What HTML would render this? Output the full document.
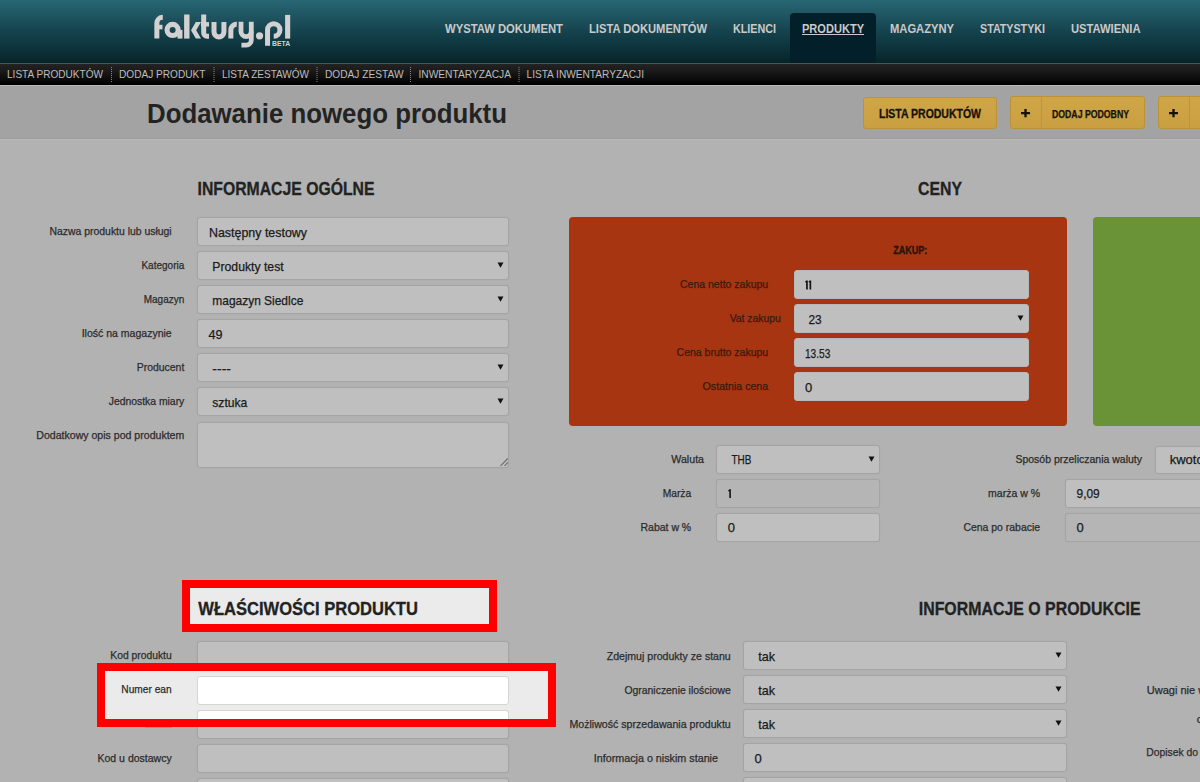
<!DOCTYPE html>
<html><head><meta charset="utf-8"><style>
html,body{margin:0;padding:0;}
body{width:1200px;height:782px;overflow:hidden;position:relative;background:#b2b2b2;font-family:"Liberation Sans",sans-serif;}
#b>div{position:absolute;}
svg{position:absolute;left:0;top:0;}
svg text{font-family:"Liberation Sans",sans-serif;}
</style></head><body>
<div id="b">
<div style="left:0px;top:0px;width:1200px;height:63px;background:linear-gradient(#286674,#15434d 50%,#06242a)"></div>
<div style="left:790px;top:13px;width:86px;height:50px;background:#03202a;border-radius:4px 4px 0 0"></div>
<div style="left:0px;top:63px;width:1200px;height:1px;background:#4a5557"></div>
<div style="left:0px;top:64px;width:1200px;height:21px;background:linear-gradient(#232323,#1b1b1b 30%,#000)"></div>
<div style="left:0px;top:85px;width:1200px;height:1px;background:#bababa"></div>
<div style="left:0px;top:86px;width:1200px;height:52px;background:#a3a3a3"></div>
<div style="left:0px;top:138px;width:1200px;height:1px;background:#9c9c9c"></div>
<div style="left:0px;top:139px;width:1200px;height:1px;background:#b8b8b8"></div>
<div style="left:863px;top:97px;width:134px;height:32px;background:linear-gradient(#cfa647,#c99f42);border:1px solid #bb9236;border-radius:3px;box-sizing:border-box"></div>
<div style="left:1010px;top:96px;width:135px;height:33px;background:linear-gradient(#cfa647,#c99f42);border:1px solid #bb9236;border-radius:3px;box-sizing:border-box"></div>
<div style="left:1041px;top:97px;width:1px;height:31px;background:#bf9538"></div>
<div style="left:1158px;top:96px;width:60px;height:33px;background:linear-gradient(#cfa647,#c99f42);border:1px solid #bb9236;border-radius:3px;box-sizing:border-box"></div>
<div style="left:1189px;top:97px;width:1px;height:31px;background:#bf9538"></div>
<div style="left:197px;top:217px;width:312px;height:29px;background:#bfbfbf;border:1px solid #a4a4a4;border-radius:3px;box-sizing:border-box;box-shadow:0 0 1px rgba(0,0,0,0.08)"></div>
<div style="left:197px;top:251px;width:312px;height:29px;background:#bfbfbf;border:1px solid #a4a4a4;border-radius:3px;box-sizing:border-box;box-shadow:0 0 1px rgba(0,0,0,0.08)"></div>
<div style="left:197px;top:285px;width:312px;height:29px;background:#bfbfbf;border:1px solid #a4a4a4;border-radius:3px;box-sizing:border-box;box-shadow:0 0 1px rgba(0,0,0,0.08)"></div>
<div style="left:197px;top:319px;width:312px;height:29px;background:#bfbfbf;border:1px solid #a4a4a4;border-radius:3px;box-sizing:border-box;box-shadow:0 0 1px rgba(0,0,0,0.08)"></div>
<div style="left:197px;top:353px;width:312px;height:29px;background:#bfbfbf;border:1px solid #a4a4a4;border-radius:3px;box-sizing:border-box;box-shadow:0 0 1px rgba(0,0,0,0.08)"></div>
<div style="left:197px;top:387px;width:312px;height:29px;background:#bfbfbf;border:1px solid #a4a4a4;border-radius:3px;box-sizing:border-box;box-shadow:0 0 1px rgba(0,0,0,0.08)"></div>
<div style="left:197px;top:422px;width:312px;height:46px;background:#bfbfbf;border:1px solid #a4a4a4;border-radius:3px;box-sizing:border-box;box-shadow:0 0 1px rgba(0,0,0,0.08)"></div>
<div style="left:569px;top:217px;width:498px;height:209px;background:#a83512;border-radius:4px"></div>
<div style="left:1093px;top:217px;width:120px;height:209px;background:#6a9338;border-radius:4px"></div>
<div style="left:794px;top:270px;width:235px;height:29px;background:#bfbfbf;border:1px solid #b8b8b8;border-radius:3px;box-sizing:border-box;box-shadow:0 0 1px rgba(0,0,0,0.08)"></div>
<div style="left:794px;top:304px;width:235px;height:29px;background:#bfbfbf;border:1px solid #b8b8b8;border-radius:3px;box-sizing:border-box;box-shadow:0 0 1px rgba(0,0,0,0.08)"></div>
<div style="left:794px;top:338px;width:235px;height:29px;background:#bfbfbf;border:1px solid #b8b8b8;border-radius:3px;box-sizing:border-box;box-shadow:0 0 1px rgba(0,0,0,0.08)"></div>
<div style="left:794px;top:372px;width:235px;height:29px;background:#bfbfbf;border:1px solid #b8b8b8;border-radius:3px;box-sizing:border-box;box-shadow:0 0 1px rgba(0,0,0,0.08)"></div>
<div style="left:716px;top:445px;width:164px;height:29px;background:#bfbfbf;border:1px solid #a4a4a4;border-radius:3px;box-sizing:border-box;box-shadow:0 0 1px rgba(0,0,0,0.08)"></div>
<div style="left:716px;top:479px;width:164px;height:29px;background:#b5b5b5;border:1px solid #a4a4a4;border-radius:3px;box-sizing:border-box;box-shadow:0 0 1px rgba(0,0,0,0.08)"></div>
<div style="left:716px;top:513px;width:164px;height:29px;background:#bfbfbf;border:1px solid #a4a4a4;border-radius:3px;box-sizing:border-box;box-shadow:0 0 1px rgba(0,0,0,0.08)"></div>
<div style="left:1155px;top:446px;width:60px;height:28px;background:#bfbfbf;border:1px solid #a4a4a4;border-radius:3px;box-sizing:border-box;box-shadow:0 0 1px rgba(0,0,0,0.08)"></div>
<div style="left:1065px;top:479px;width:150px;height:29px;background:#bfbfbf;border:1px solid #a4a4a4;border-radius:3px;box-sizing:border-box;box-shadow:0 0 1px rgba(0,0,0,0.08)"></div>
<div style="left:1065px;top:513px;width:150px;height:29px;background:#b5b5b5;border:1px solid #a4a4a4;border-radius:3px;box-sizing:border-box;box-shadow:0 0 1px rgba(0,0,0,0.08)"></div>
<div style="left:197px;top:641px;width:312px;height:29px;background:#bfbfbf;border:1px solid #a4a4a4;border-radius:3px;box-sizing:border-box;box-shadow:0 0 1px rgba(0,0,0,0.08)"></div>
<div style="left:197px;top:710px;width:312px;height:29px;background:#bfbfbf;border:1px solid #a4a4a4;border-radius:3px;box-sizing:border-box;box-shadow:0 0 1px rgba(0,0,0,0.08)"></div>
<div style="left:197px;top:744px;width:312px;height:29px;background:#bfbfbf;border:1px solid #a4a4a4;border-radius:3px;box-sizing:border-box;box-shadow:0 0 1px rgba(0,0,0,0.08)"></div>
<div style="left:197px;top:778px;width:312px;height:29px;background:#bfbfbf;border:1px solid #a4a4a4;border-radius:3px;box-sizing:border-box;box-shadow:0 0 1px rgba(0,0,0,0.08)"></div>
<div style="left:182px;top:580px;width:315px;height:52px;background:#ebebeb;border:8px solid #fe0000;box-sizing:border-box"></div>
<div style="left:97px;top:663px;width:459px;height:64px;background:#ebebeb;border:8px solid #fe0000;box-sizing:border-box"></div>
<div style="left:197px;top:676px;width:312px;height:29px;background:#fff;border:1px solid #d5d5d5;border-radius:3px;box-sizing:border-box"></div>
<div style="left:197px;top:710px;width:312px;height:9px;background:#fff;border:1px solid #d5d5d5;border-bottom:none;border-radius:3px 3px 0 0;box-sizing:border-box"></div>
<div style="left:743px;top:641px;width:324px;height:29px;background:#bfbfbf;border:1px solid #a4a4a4;border-radius:3px;box-sizing:border-box;box-shadow:0 0 1px rgba(0,0,0,0.08)"></div>
<div style="left:743px;top:675px;width:324px;height:29px;background:#bfbfbf;border:1px solid #a4a4a4;border-radius:3px;box-sizing:border-box;box-shadow:0 0 1px rgba(0,0,0,0.08)"></div>
<div style="left:743px;top:709px;width:324px;height:29px;background:#bfbfbf;border:1px solid #a4a4a4;border-radius:3px;box-sizing:border-box;box-shadow:0 0 1px rgba(0,0,0,0.08)"></div>
<div style="left:743px;top:743px;width:324px;height:29px;background:#bfbfbf;border:1px solid #a4a4a4;border-radius:3px;box-sizing:border-box;box-shadow:0 0 1px rgba(0,0,0,0.08)"></div>
<div style="left:743px;top:777px;width:324px;height:29px;background:#bfbfbf;border:1px solid #a4a4a4;border-radius:3px;box-sizing:border-box;box-shadow:0 0 1px rgba(0,0,0,0.08)"></div>
</div>
<svg width="1200" height="782" viewBox="0 0 1200 782">
<text x="445" y="33.3" font-size="13" font-weight="bold" fill="#c9c9c9" text-anchor="start" textLength="118" lengthAdjust="spacingAndGlyphs" >WYSTAW DOKUMENT</text>
<text x="589" y="33.3" font-size="13" font-weight="bold" fill="#c9c9c9" text-anchor="start" textLength="118" lengthAdjust="spacingAndGlyphs" >LISTA DOKUMENTÓW</text>
<text x="733" y="33.3" font-size="13" font-weight="bold" fill="#c9c9c9" text-anchor="start" textLength="43" lengthAdjust="spacingAndGlyphs" >KLIENCI</text>
<text x="802" y="33.3" font-size="13" font-weight="bold" fill="#c9c9c9" text-anchor="start" textLength="62" lengthAdjust="spacingAndGlyphs" >PRODUKTY</text>
<text x="890" y="33.3" font-size="13" font-weight="bold" fill="#c9c9c9" text-anchor="start" textLength="64" lengthAdjust="spacingAndGlyphs" >MAGAZYNY</text>
<text x="980" y="33.3" font-size="13" font-weight="bold" fill="#c9c9c9" text-anchor="start" textLength="65" lengthAdjust="spacingAndGlyphs" >STATYSTYKI</text>
<text x="1071" y="33.3" font-size="13" font-weight="bold" fill="#c9c9c9" text-anchor="start" textLength="69.5" lengthAdjust="spacingAndGlyphs" >USTAWIENIA</text>
<rect x="802" y="34" width="62" height="1" fill="#c9c9c9"/>
<text x="7" y="78" font-size="10.8" font-weight="normal" fill="#bdbdbd" text-anchor="start" textLength="96" lengthAdjust="spacingAndGlyphs" >LISTA PRODUKTÓW</text>
<text x="119" y="78" font-size="10.8" font-weight="normal" fill="#bdbdbd" text-anchor="start" textLength="86.5" lengthAdjust="spacingAndGlyphs" >DODAJ PRODUKT</text>
<text x="222" y="78" font-size="10.8" font-weight="normal" fill="#bdbdbd" text-anchor="start" textLength="87" lengthAdjust="spacingAndGlyphs" >LISTA ZESTAWÓW</text>
<text x="325" y="78" font-size="10.8" font-weight="normal" fill="#bdbdbd" text-anchor="start" textLength="78.5" lengthAdjust="spacingAndGlyphs" >DODAJ ZESTAW</text>
<text x="418.5" y="78" font-size="10.8" font-weight="normal" fill="#bdbdbd" text-anchor="start" textLength="92.5" lengthAdjust="spacingAndGlyphs" >INWENTARYZACJA</text>
<text x="526.5" y="78" font-size="10.8" font-weight="normal" fill="#bdbdbd" text-anchor="start" textLength="117.5" lengthAdjust="spacingAndGlyphs" >LISTA INWENTARYZACJI</text>
<line x1="111.5" y1="67" x2="111.5" y2="82" stroke="#8a8a8a" stroke-width="1" stroke-dasharray="1,1"/>
<line x1="214" y1="67" x2="214" y2="82" stroke="#8a8a8a" stroke-width="1" stroke-dasharray="1,1"/>
<line x1="317" y1="67" x2="317" y2="82" stroke="#8a8a8a" stroke-width="1" stroke-dasharray="1,1"/>
<line x1="410.5" y1="67" x2="410.5" y2="82" stroke="#8a8a8a" stroke-width="1" stroke-dasharray="1,1"/>
<line x1="519" y1="67" x2="519" y2="82" stroke="#8a8a8a" stroke-width="1" stroke-dasharray="1,1"/>
<text x="147" y="123" font-size="28" font-weight="bold" fill="#232323" text-anchor="start" textLength="360" lengthAdjust="spacingAndGlyphs" >Dodawanie nowego produktu</text>
<text x="879" y="118" font-size="12.2" font-weight="bold" fill="#15120c" text-anchor="start" textLength="102" lengthAdjust="spacingAndGlyphs" stroke="#15120c" stroke-width="0.3" >LISTA PRODUKTÓW</text>
<path d="M1021 112 H1030 V114.3 H1021 Z M1024.35 109 H1026.65 V117.3 H1024.35 Z" fill="#15120c"/>
<text x="1052" y="118" font-size="10.3" font-weight="bold" fill="#15120c" text-anchor="start" textLength="77" lengthAdjust="spacingAndGlyphs" stroke="#15120c" stroke-width="0.25" >DODAJ PODOBNY</text>
<path d="M1169 112 H1178 V114.3 H1169 Z M1172.35 109 H1174.65 V117.3 H1172.35 Z" fill="#15120c"/>
<text x="197.5" y="195" font-size="18.5" font-weight="bold" fill="#222222" text-anchor="start" textLength="177" lengthAdjust="spacingAndGlyphs" stroke="#222222" stroke-width="0.3" >INFORMACJE OGÓLNE</text>
<text x="171.7" y="235.3" font-size="11" font-weight="normal" fill="#2b2b2b" text-anchor="end" textLength="122.19999999999999" lengthAdjust="spacingAndGlyphs" stroke="#2b2b2b" stroke-width="0.25" >Nazwa produktu lub usługi</text>
<text x="209" y="237.3" font-size="13" font-weight="normal" fill="#1a1a1a" text-anchor="start" textLength="98" lengthAdjust="spacingAndGlyphs" stroke="#1a1a1a" stroke-width="0.25" >Następny testowy</text>
<path d="M497.5 262.5 L503.5 262.5 L500.5 267.8 Z" fill="#111"/>
<text x="184.3" y="269.3" font-size="11" font-weight="normal" fill="#2b2b2b" text-anchor="end" textLength="42.900000000000006" lengthAdjust="spacingAndGlyphs" stroke="#2b2b2b" stroke-width="0.25" >Kategoria</text>
<text x="212.3" y="271.3" font-size="13" font-weight="normal" fill="#1a1a1a" text-anchor="start" textLength="71.39999999999998" lengthAdjust="spacingAndGlyphs" stroke="#1a1a1a" stroke-width="0.25" >Produkty test</text>
<path d="M497.5 296.5 L503.5 296.5 L500.5 301.8 Z" fill="#111"/>
<text x="184.3" y="303.3" font-size="11" font-weight="normal" fill="#2b2b2b" text-anchor="end" textLength="40.60000000000002" lengthAdjust="spacingAndGlyphs" stroke="#2b2b2b" stroke-width="0.25" >Magazyn</text>
<text x="212.3" y="305.3" font-size="13" font-weight="normal" fill="#1a1a1a" text-anchor="start" textLength="91.0" lengthAdjust="spacingAndGlyphs" stroke="#1a1a1a" stroke-width="0.25" >magazyn Siedlce</text>
<text x="171.7" y="337.3" font-size="11" font-weight="normal" fill="#2b2b2b" text-anchor="end" textLength="89.99999999999999" lengthAdjust="spacingAndGlyphs" stroke="#2b2b2b" stroke-width="0.25" >Ilość na magazynie</text>
<text x="208.6" y="339.3" font-size="13" font-weight="normal" fill="#1a1a1a" text-anchor="start" textLength="14.0" lengthAdjust="spacingAndGlyphs" stroke="#1a1a1a" stroke-width="0.25" >49</text>
<path d="M497.5 364.5 L503.5 364.5 L500.5 369.8 Z" fill="#111"/>
<text x="184.3" y="371.3" font-size="11" font-weight="normal" fill="#2b2b2b" text-anchor="end" textLength="47.60000000000002" lengthAdjust="spacingAndGlyphs" stroke="#2b2b2b" stroke-width="0.25" >Producent</text>
<text x="212.3" y="373.3" font-size="13" font-weight="normal" fill="#1a1a1a" text-anchor="start" textLength="18.69999999999999" lengthAdjust="spacingAndGlyphs" stroke="#1a1a1a" stroke-width="0.25" >----</text>
<path d="M497.5 398.5 L503.5 398.5 L500.5 403.8 Z" fill="#111"/>
<text x="184.3" y="405.3" font-size="11" font-weight="normal" fill="#2b2b2b" text-anchor="end" textLength="75.60000000000001" lengthAdjust="spacingAndGlyphs" stroke="#2b2b2b" stroke-width="0.25" >Jednostka miary</text>
<text x="212.3" y="407.3" font-size="13" font-weight="normal" fill="#1a1a1a" text-anchor="start" textLength="35.0" lengthAdjust="spacingAndGlyphs" stroke="#1a1a1a" stroke-width="0.25" >sztuka</text>
<text x="184.3" y="439.3" font-size="11" font-weight="normal" fill="#2b2b2b" text-anchor="end" textLength="148" lengthAdjust="spacingAndGlyphs" stroke="#2b2b2b" stroke-width="0.25" >Dodatkowy opis pod produktem</text>
<path d="M500.5 465.8 L507.8 458.5 M504.5 465.8 L507.8 462.5" stroke="#6e6e6e" stroke-width="1.1"/>
<text x="918" y="195" font-size="18.5" font-weight="bold" fill="#222222" text-anchor="start" textLength="44" lengthAdjust="spacingAndGlyphs" stroke="#222222" stroke-width="0.3" >CENY</text>
<text x="893.3" y="254" font-size="10.5" font-weight="bold" fill="#24140c" text-anchor="start" textLength="34" lengthAdjust="spacingAndGlyphs" stroke="#24140c" stroke-width="0.3" >ZAKUP:</text>
<text x="768.2" y="288" font-size="11" font-weight="normal" fill="#3a1a0c" text-anchor="end" textLength="88.20000000000005" lengthAdjust="spacingAndGlyphs" stroke="#3a1a0c" stroke-width="0.25" >Cena netto zakupu</text>
<text x="805" y="290" font-size="13" font-weight="normal" fill="#1a1a1a" text-anchor="start" stroke="#1a1a1a" stroke-width="0.25" ></text>
<path d="M1017.5 315.5 L1023.5 315.5 L1020.5 320.8 Z" fill="#111"/>
<text x="780.8" y="322" font-size="11" font-weight="normal" fill="#3a1a0c" text-anchor="end" textLength="51.09999999999991" lengthAdjust="spacingAndGlyphs" stroke="#3a1a0c" stroke-width="0.25" >Vat zakupu</text>
<text x="808.4" y="324" font-size="13" font-weight="normal" fill="#1a1a1a" text-anchor="start" textLength="13.200000000000045" lengthAdjust="spacingAndGlyphs" stroke="#1a1a1a" stroke-width="0.25" >23</text>
<text x="768.2" y="356" font-size="11" font-weight="normal" fill="#3a1a0c" text-anchor="end" textLength="91.60000000000002" lengthAdjust="spacingAndGlyphs" stroke="#3a1a0c" stroke-width="0.25" >Cena brutto zakupu</text>
<text x="805" y="358" font-size="13" font-weight="normal" fill="#1a1a1a" text-anchor="start" textLength="25.299999999999955" lengthAdjust="spacingAndGlyphs" stroke="#1a1a1a" stroke-width="0.25" >13.53</text>
<text x="768.2" y="390" font-size="11" font-weight="normal" fill="#3a1a0c" text-anchor="end" textLength="65.60000000000002" lengthAdjust="spacingAndGlyphs" stroke="#3a1a0c" stroke-width="0.25" >Ostatnia cena</text>
<text x="805" y="392" font-size="13" font-weight="normal" fill="#1a1a1a" text-anchor="start" stroke="#1a1a1a" stroke-width="0.25" >0</text>
<path d="M868.5 456.5 L874.5 456.5 L871.5 461.8 Z" fill="#111"/>
<text x="704" y="462.8" font-size="11" font-weight="normal" fill="#2b2b2b" text-anchor="end" textLength="32.700000000000045" lengthAdjust="spacingAndGlyphs" stroke="#2b2b2b" stroke-width="0.25" >Waluta</text>
<text x="731.5" y="464" font-size="13" font-weight="normal" fill="#1a1a1a" text-anchor="start" textLength="19.899999999999977" lengthAdjust="spacingAndGlyphs" stroke="#1a1a1a" stroke-width="0.25" >THB</text>
<text x="691.2" y="496.8" font-size="11" font-weight="normal" fill="#2b2b2b" text-anchor="end" textLength="28.5" lengthAdjust="spacingAndGlyphs" stroke="#2b2b2b" stroke-width="0.25" >Marża</text>
<text x="727.8" y="498" font-size="13" font-weight="normal" fill="#1a1a1a" text-anchor="start" stroke="#1a1a1a" stroke-width="0.25" ></text>
<text x="691.2" y="530.8" font-size="11" font-weight="normal" fill="#2b2b2b" text-anchor="end" textLength="50.700000000000045" lengthAdjust="spacingAndGlyphs" stroke="#2b2b2b" stroke-width="0.25" >Rabat w %</text>
<text x="727.8" y="532" font-size="13" font-weight="normal" fill="#1a1a1a" text-anchor="start" stroke="#1a1a1a" stroke-width="0.25" >0</text>
<text x="1142" y="462.75" font-size="11" font-weight="normal" fill="#2b2b2b" text-anchor="end" textLength="126.6" lengthAdjust="spacingAndGlyphs" stroke="#2b2b2b" stroke-width="0.25" >Sposób przeliczania waluty</text>
<text x="1169.7" y="463.8" font-size="13" font-weight="normal" fill="#1a1a1a" text-anchor="start" stroke="#1a1a1a" stroke-width="0.25" >kwotc</text>
<text x="1040.1" y="496.8" font-size="11" font-weight="normal" fill="#2b2b2b" text-anchor="end" textLength="51.999999999999886" lengthAdjust="spacingAndGlyphs" stroke="#2b2b2b" stroke-width="0.25" >marża w %</text>
<text x="1076.5" y="498" font-size="13" font-weight="normal" fill="#1a1a1a" text-anchor="start" textLength="23.200000000000045" lengthAdjust="spacingAndGlyphs" stroke="#1a1a1a" stroke-width="0.25" >9,09</text>
<text x="1040.1" y="530.8" font-size="11" font-weight="normal" fill="#2b2b2b" text-anchor="end" textLength="76.69999999999993" lengthAdjust="spacingAndGlyphs" stroke="#2b2b2b" stroke-width="0.25" >Cena po rabacie</text>
<text x="1076.5" y="532" font-size="13" font-weight="normal" fill="#1a1a1a" text-anchor="start" stroke="#1a1a1a" stroke-width="0.25" >0</text>
<text x="171.7" y="658.7" font-size="11" font-weight="normal" fill="#2b2b2b" text-anchor="end" textLength="61.4" lengthAdjust="spacingAndGlyphs" stroke="#2b2b2b" stroke-width="0.25" >Kod produktu</text>
<text x="171.7" y="761.5" font-size="11" font-weight="normal" fill="#2b2b2b" text-anchor="end" textLength="74.2" lengthAdjust="spacingAndGlyphs" stroke="#2b2b2b" stroke-width="0.25" >Kod u dostawcy</text>
<text x="198.3" y="614.5" font-size="18.5" font-weight="bold" fill="#222222" text-anchor="start" textLength="219.6" lengthAdjust="spacingAndGlyphs" stroke="#222222" stroke-width="0.3" >WŁAŚCIWOŚCI PRODUKTU</text>
<text x="171.7" y="693.3" font-size="11" font-weight="normal" fill="#2b2b2b" text-anchor="end" textLength="50.4" lengthAdjust="spacingAndGlyphs" stroke="#2b2b2b" stroke-width="0.25" >Numer ean</text>
<text x="918.75" y="614.5" font-size="18.5" font-weight="bold" fill="#222222" text-anchor="start" textLength="221.75" lengthAdjust="spacingAndGlyphs" stroke="#222222" stroke-width="0.3" >INFORMACJE O PRODUKCIE</text>
<path d="M1055.5 652.5 L1061.5 652.5 L1058.5 657.8 Z" fill="#111"/>
<text x="730.75" y="659.5" font-size="11" font-weight="normal" fill="#2b2b2b" text-anchor="end" textLength="124.0" lengthAdjust="spacingAndGlyphs" stroke="#2b2b2b" stroke-width="0.25" >Zdejmuj produkty ze stanu</text>
<text x="758.25" y="661" font-size="13" font-weight="normal" fill="#1a1a1a" text-anchor="start" textLength="16.75" lengthAdjust="spacingAndGlyphs" stroke="#1a1a1a" stroke-width="0.25" >tak</text>
<path d="M1055.5 686.5 L1061.5 686.5 L1058.5 691.8 Z" fill="#111"/>
<text x="730.75" y="693.5" font-size="11" font-weight="normal" fill="#2b2b2b" text-anchor="end" textLength="106.25" lengthAdjust="spacingAndGlyphs" stroke="#2b2b2b" stroke-width="0.25" >Ograniczenie ilościowe</text>
<text x="758.25" y="695" font-size="13" font-weight="normal" fill="#1a1a1a" text-anchor="start" textLength="16.75" lengthAdjust="spacingAndGlyphs" stroke="#1a1a1a" stroke-width="0.25" >tak</text>
<path d="M1055.5 720.5 L1061.5 720.5 L1058.5 725.8 Z" fill="#111"/>
<text x="730.75" y="727.5" font-size="11" font-weight="normal" fill="#2b2b2b" text-anchor="end" textLength="161.25" lengthAdjust="spacingAndGlyphs" stroke="#2b2b2b" stroke-width="0.25" >Możliwość sprzedawania produktu</text>
<text x="758.25" y="729" font-size="13" font-weight="normal" fill="#1a1a1a" text-anchor="start" textLength="16.75" lengthAdjust="spacingAndGlyphs" stroke="#1a1a1a" stroke-width="0.25" >tak</text>
<text x="718" y="761.5" font-size="11" font-weight="normal" fill="#2b2b2b" text-anchor="end" textLength="124.25" lengthAdjust="spacingAndGlyphs" stroke="#2b2b2b" stroke-width="0.25" >Informacja o niskim stanie</text>
<text x="754.5" y="763" font-size="13" font-weight="normal" fill="#1a1a1a" text-anchor="start" stroke="#1a1a1a" stroke-width="0.25" >0</text>
<text x="1146.8" y="693.5" font-size="11" font-weight="normal" fill="#2b2b2b" text-anchor="start" stroke="#2b2b2b" stroke-width="0.25" >Uwagi nie w</text>
<text x="1196.7" y="722.6" font-size="11" font-weight="normal" fill="#2b2b2b" text-anchor="start" stroke="#2b2b2b" stroke-width="0.25" >c</text>
<text x="1146.3" y="756.2" font-size="11" font-weight="normal" fill="#2b2b2b" text-anchor="start" textLength="51.7" lengthAdjust="spacingAndGlyphs" stroke="#2b2b2b" stroke-width="0.25" >Dopisek do</text>
<path d="M806.1 280.4 H807.8 V289.6 H806.1 Z M806.1 280.4 L804.9 282.1 L806.1 282.5 Z M809.5 280.4 H811.2 V289.6 H809.5 Z M809.5 280.4 L808.3 282.1 L809.5 282.5 Z" fill="#141414"/>
<path d="M729.3 489.2 H730.9 V498 H729.3 Z M729.3 489.2 L727.9 491 L729.3 491.4 Z" fill="#141414"/>
<rect x="145" y="727" width="27" height="1" fill="#6a6a6a" opacity="0.3"/>
<g fill="none" stroke="#d2d0d0" stroke-width="5" stroke-linecap="butt">
<path d="M156.85 38.6 V23.2 A5.95 5.95 0 0 1 162.8 17.25"/>
<circle cx="172.6" cy="29.9" r="5.55" stroke-width="5.1"/>
<path d="M180 29.9 V38.6" stroke-width="5"/>
<path d="M186.8 14.5 V38.6" stroke-width="5.4"/>
<path d="M203.7 14.5 V33 A3.2 3.2 0 0 0 206.9 36.2 H209" stroke-width="5"/>
<path d="M214 22.1 V32 A4.95 4.95 0 0 0 223.9 32 V22.1"/>
<path d="M230.85 38.6 V30 A5.7 5.7 0 0 1 236.8 24.3" stroke-width="5"/>
<path d="M241 21.8 V31.5 A5.15 5.15 0 0 0 251.3 31.5 V21.8" stroke-width="4.8"/>
<path d="M251.3 31.5 V40 A5.15 5.15 0 0 1 246.15 45.15 H241.4" stroke-width="4.8"/>
<path d="M267.55 45.8 V30" stroke-width="5"/>
<path d="M267.55 30 A6.2 6.2 0 1 1 273.75 36.2" stroke-width="5"/>
</g>
<g fill="#d2d0d0">
<rect x="159" y="24.8" width="3.5" height="4.5"/>
<polygon points="191,30.2 195.8,22.1 201,22.1 196.2,30.2 201,38.6 195.8,38.6"/>
<rect x="201" y="22.1" width="8" height="4.4"/>
<rect x="285.1" y="14.9" width="5.1" height="23.7"/>
<circle cx="259.55" cy="35.8" r="3.6"/>
</g>
<text x="272" y="45.8" font-size="6.4" font-weight="bold" fill="#d2d0d0" textLength="18.2" lengthAdjust="spacingAndGlyphs">BETA</text>
</svg>
</body></html>
